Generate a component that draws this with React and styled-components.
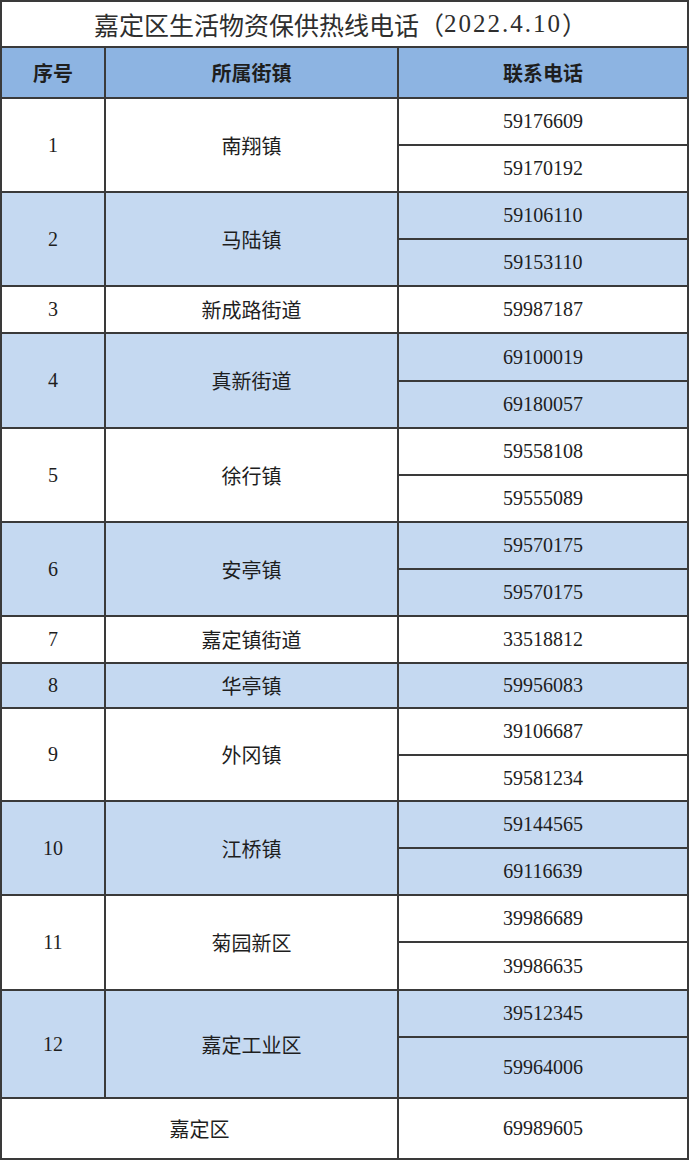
import { createGlobalStyle, styled } from "styled-components"

const GlobalStyle = createGlobalStyle`
  html, body {
    margin: 0;
    padding: 0;
    background: #ffffff;
  }
  body {
    font-family: "Liberation Serif", "Noto Sans CJK SC", serif;
    color: #1e1e1e;
  }
`

const LINE = "#3a3a3a"

// the whole sheet, outer frame
const Sheet = styled.div`
  width: 689px;
  box-sizing: border-box;
  border: 2px solid ${LINE};
  background: #fff;
`

const Title = styled.div`
  height: 44px;
  display: flex;
  align-items: center;
  justify-content: center;
  font-size: 25px;
  color: #2e2e2e;
  padding-right: 8px;
`

const DateText = styled.span`
  letter-spacing: 2px;
`

// one row of three columns, header or a group of a street
const Row = styled.div`
  display: grid;
  grid-template-columns: 102px 293px 1fr;
  border-top: 2px solid ${LINE};
  background: ${p => (p.$head ? "#8db4e2" : p.$shade ? "#c5d9f1" : "#ffffff")};
  height: ${p => (p.$h ? p.$h + "px" : "auto")};
  box-sizing: border-box;
`

const TotalRow = styled.div`
  display: grid;
  grid-template-columns: 395px 1fr;
  border-top: 2px solid ${LINE};
  height: 61px;
  box-sizing: border-box;
`

const Cell = styled.div`
  display: flex;
  align-items: center;
  justify-content: center;
  box-sizing: border-box;
  font-size: 20px;
  font-weight: ${p => (p.$bold ? 700 : 400)};
  ${p => p.$line && `border-left: 2px solid ${LINE};`}
`

const Phones = styled.div`
  display: flex;
  flex-direction: column;
  border-left: 2px solid ${LINE};
`

const Phone = styled.div`
  height: ${p => p.$h}px;
  box-sizing: border-box;
  display: flex;
  align-items: center;
  justify-content: center;
  font-size: 20px;
  & + & {
    border-top: 2px solid ${LINE};
  }
`

// heights: first phone cell excludes the row border, later ones include their own line
const groups = [
  { no: 1, name: "南翔镇", phones: [["59176609", 45], ["59170192", 47]] },
  { no: 2, name: "马陆镇", phones: [["59106110", 45], ["59153110", 47]] },
  { no: 3, name: "新成路街道", phones: [["59987187", 45]] },
  { no: 4, name: "真新街道", phones: [["69100019", 46], ["69180057", 47]] },
  { no: 5, name: "徐行镇", phones: [["59558108", 45], ["59555089", 47]] },
  { no: 6, name: "安亭镇", phones: [["59570175", 45], ["59570175", 47]] },
  { no: 7, name: "嘉定镇街道", phones: [["33518812", 45]] },
  { no: 8, name: "华亭镇", phones: [["59956083", 43]] },
  { no: 9, name: "外冈镇", phones: [["39106687", 45], ["59581234", 46]] },
  { no: 10, name: "江桥镇", phones: [["59144565", 45], ["69116639", 47]] },
  { no: 11, name: "菊园新区", phones: [["39986689", 45], ["39986635", 48]] },
  { no: 12, name: "嘉定工业区", phones: [["39512345", 45], ["59964006", 61]] },
]

const App = () => {
  return (
    <>
      <GlobalStyle />
      <Sheet>
        <Title>嘉定区生活物资保供热线电话（<DateText>2022.4.10</DateText>）</Title>
        <Row $head $h={51}>
          <Cell $bold>序号</Cell>
          <Cell $bold $line>所属街镇</Cell>
          <Cell $bold $line>联系电话</Cell>
        </Row>
        {groups.map((g, i) => (
          <Row key={g.no} $shade={i % 2 === 1}>
            <Cell>{g.no}</Cell>
            <Cell $line>{g.name}</Cell>
            <Phones>
              {g.phones.map(([num, h], j) => (
                <Phone key={j} $h={h}>{num}</Phone>
              ))}
            </Phones>
          </Row>
        ))}
        <TotalRow>
          <Cell>嘉定区</Cell>
          <Cell $line>69989605</Cell>
        </TotalRow>
      </Sheet>
    </>
  )
}

export default App
